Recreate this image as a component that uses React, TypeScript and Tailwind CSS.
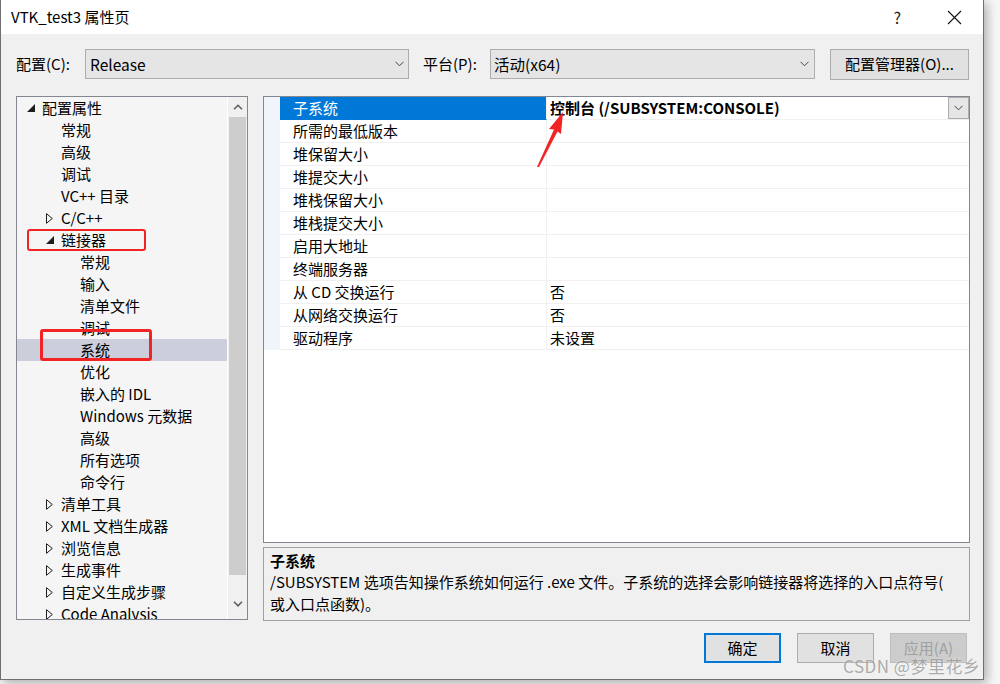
import React from "react";

type TreeItem = { t: string; l: 0 | 1 | 2; a?: "open" | "closed"; sel?: boolean };

const tree: TreeItem[] = [
  { t: "配置属性", l: 0, a: "open" },
  { t: "常规", l: 1 },
  { t: "高级", l: 1 },
  { t: "调试", l: 1 },
  { t: "VC++ 目录", l: 1 },
  { t: "C/C++", l: 1, a: "closed" },
  { t: "链接器", l: 1, a: "open" },
  { t: "常规", l: 2 },
  { t: "输入", l: 2 },
  { t: "清单文件", l: 2 },
  { t: "调试", l: 2 },
  { t: "系统", l: 2, sel: true },
  { t: "优化", l: 2 },
  { t: "嵌入的 IDL", l: 2 },
  { t: "Windows 元数据", l: 2 },
  { t: "高级", l: 2 },
  { t: "所有选项", l: 2 },
  { t: "命令行", l: 2 },
  { t: "清单工具", l: 1, a: "closed" },
  { t: "XML 文档生成器", l: 1, a: "closed" },
  { t: "浏览信息", l: 1, a: "closed" },
  { t: "生成事件", l: 1, a: "closed" },
  { t: "自定义生成步骤", l: 1, a: "closed" },
  { t: "Code Analysis", l: 1, a: "closed" },
];

const indent: Record<number, string> = {
  0: "pl-[10px]",
  1: "pl-[29px]",
  2: "pl-[48px]",
};

const props: [string, string][] = [
  ["子系统", "控制台 (/SUBSYSTEM:CONSOLE)"],
  ["所需的最低版本", ""],
  ["堆保留大小", ""],
  ["堆提交大小", ""],
  ["堆栈保留大小", ""],
  ["堆栈提交大小", ""],
  ["启用大地址", ""],
  ["终端服务器", ""],
  ["从 CD 交换运行", "否"],
  ["从网络交换运行", "否"],
  ["驱动程序", "未设置"],
];

function Chevron({ className = "" }: { className?: string }) {
  return (
    <svg width="9" height="6" viewBox="0 0 9 6" className={className}>
      <path d="M0.5 0.8 L4.5 4.8 L8.5 0.8" fill="none" stroke="#444" strokeWidth="1" />
    </svg>
  );
}

function Arrow({ kind }: { kind?: "open" | "closed" }) {
  if (kind === "open")
    return (
      <svg width="8" height="8" viewBox="0 0 8 8">
        <polygon points="0,8 8,8 8,0" fill="#1e1e1e" />
      </svg>
    );
  if (kind === "closed")
    return (
      <svg width="7" height="11" viewBox="0 0 7 11">
        <polygon points="0.5,0.7 6.3,5.5 0.5,10.3" fill="none" stroke="#1e1e1e" strokeWidth="1" />
      </svg>
    );
  return null;
}

export default function App() {
  return (
    <div className="w-[1000px] h-[684px] overflow-hidden bg-[#f6f6f6] relative [font-family:'Noto_Sans_CJK_SC','Noto_Sans',sans-serif] text-[15px] text-black">
      <div className="w-[984px] h-[680px] flex flex-col border-l border-r border-b border-[#6f6f6f] bg-[#f0f0f0] shadow-[3px_3px_10px_rgba(0,0,0,0.3)]">
        {/* title bar */}
        <div className="h-[34px] bg-white flex items-center pl-[10px] shrink-0">
          <span className="leading-[20px] text-[15px]">VTK_test3 属性页</span>
          <div className="flex-1" />
          <span className="text-[16px] leading-[20px] mr-[46px] text-[#222]">?</span>
          <svg width="15" height="15" viewBox="0 0 15 15" className="mr-[21px]">
            <path d="M1 1 L14 14 M14 1 L1 14" stroke="#111" strokeWidth="1.1" />
          </svg>
        </div>

        {/* config row */}
        <div className="flex items-center mt-[15px] pl-[15px] h-[30px] shrink-0">
          <span className="w-[69px] leading-[20px]">配置(C):</span>
          <div className="w-[324px] h-[30px] bg-[#e5e5e5] border border-[#adadad] flex items-center pl-[4px] pr-[4px]">
            <span className="flex-1 leading-[20px] text-[15.5px]">Release</span>
            <Chevron />
          </div>
          <span className="ml-[14px] w-[67px] leading-[20px]">平台(P):</span>
          <div className="w-[325px] h-[30px] bg-[#e5e5e5] border border-[#adadad] flex items-center pl-[3px] pr-[5px]">
            <span className="flex-1 leading-[20px] text-[15.5px]">活动(x64)</span>
            <Chevron />
          </div>
          <div className="ml-[15px] w-[139px] h-[31px] bg-[#e1e1e1] border border-[#adadad] flex items-center justify-center">
            <span className="leading-[20px]">配置管理器(O)...</span>
          </div>
        </div>

        {/* main */}
        <div className="flex mt-[17px] pl-[15px]">
          {/* tree */}
          <div className="w-[232px] h-[524px] border border-[#828790] bg-[#f5f5f5] flex overflow-hidden">
            <div className="w-[210px] overflow-hidden">
              {tree.map((it, i) => (
                <div
                  key={i}
                  className={`h-[22px] flex items-center whitespace-nowrap ${indent[it.l]} ${it.sel ? "bg-[#cccedb]" : ""}`}
                >
                  <div className="w-[15px] flex items-center">
                    <Arrow kind={it.a} />
                  </div>
                  <span className="leading-[20px]">{it.t}</span>
                </div>
              ))}
            </div>
            <div className="w-[20px] border-l border-white bg-[#f0f0f0] flex flex-col">
              <div className="h-[20px] flex items-center justify-center">
                <svg width="10" height="6" viewBox="0 0 10 6">
                  <path d="M1 5.3 L5 1.3 L9 5.3" fill="none" stroke="#606060" strokeWidth="1.6" />
                </svg>
              </div>
              <div className="mx-[1px] h-[458px] bg-[#cdcdcd]" />
              <div className="flex-1" />
              <div className="h-[24px] flex items-start justify-center pt-[6px]">
                <svg width="10" height="6" viewBox="0 0 10 6">
                  <path d="M1 0.8 L5 4.8 L9 0.8" fill="none" stroke="#606060" strokeWidth="1.6" />
                </svg>
              </div>
            </div>
          </div>

          {/* right side */}
          <div className="ml-[15px] w-[707px] flex flex-col">
            <div className="h-[447px] border border-[#828790] bg-white overflow-hidden">
              {props.map(([n, v], i) => (
                <div key={i} className="h-[23px] flex">
                  <div className="w-[16px] bg-[#f1f4fb]" />
                  <div
                    className={`w-[267px] flex items-center pl-[13px] whitespace-nowrap border-b border-r border-[#f0f0f0] ${
                      i === 0 ? "bg-[#0078d7] text-white border-b-[#0078d7]" : ""
                    }`}
                  >
                    <span className="leading-[20px]">{n}</span>
                  </div>
                  <div className="flex-1 flex items-center border-b border-[#f0f0f0] pl-[3px] whitespace-nowrap">
                    <span className={`flex-1 leading-[20px] ${i === 0 ? "font-bold" : ""}`}>{v}</span>
                    {i === 0 && (
                      <div className="w-[21px] h-[22px] bg-[#e6e6e6] border border-[#acacac] flex items-center justify-center">
                        <Chevron />
                      </div>
                    )}
                  </div>
                </div>
              ))}
            </div>
            <div className="mt-[4px] h-[74px] border border-[#a0a0a0] bg-[#f0f0f0] px-[6px] pt-[2px] whitespace-nowrap">
              <div className="font-bold leading-[21px]">子系统</div>
              <div className="leading-[22px]">
                /SUBSYSTEM 选项告知操作系统如何运行 .exe 文件。子系统的选择会影响链接器将选择的入口点符号(
              </div>
              <div className="leading-[21px]">或入口点函数)。</div>
            </div>
          </div>
        </div>

        {/* buttons */}
        <div className="flex justify-end mt-[12px] pr-[16px] gap-[16px]">
          <div className="w-[77px] h-[30px] bg-[#e1e1e1] border-2 border-[#0078d7] flex items-center justify-center">
            <span className="leading-[20px]">确定</span>
          </div>
          <div className="w-[77px] h-[30px] bg-[#e1e1e1] border border-[#adadad] flex items-center justify-center">
            <span className="leading-[20px]">取消</span>
          </div>
          <div className="w-[77px] h-[30px] bg-[#cccccc] border border-[#bfbfbf] flex items-center justify-center">
            <span className="leading-[20px] text-[#a0a0a0]">应用(A)</span>
          </div>
        </div>
      </div>

      {/* annotations */}
      <div className="absolute left-[27px] top-[229px] w-[119px] h-[22px] border-2 border-[#f02424] rounded-[3px] pointer-events-none" />
      <div className="absolute left-[40px] top-[329px] w-[112px] h-[32px] border-[3px] border-[#f02424] rounded-[3px] pointer-events-none" />
      <svg className="absolute left-0 top-0 pointer-events-none" width="1000" height="684" viewBox="0 0 1000 684">
        <polygon
          points="563,112 549,129 554,129.5 537,167 539,167 557.5,131.5 561,134"
          fill="#f02424"
        />
      </svg>

      {/* watermark */}
      <div className="absolute left-[843px] top-[654px] text-[17px] leading-[24px] tracking-[0.5px] text-[#9a9a9a] opacity-80 whitespace-nowrap [text-shadow:0_0_2px_#ffffff]">
        CSDN @梦里花乡
      </div>
    </div>
  );
}
